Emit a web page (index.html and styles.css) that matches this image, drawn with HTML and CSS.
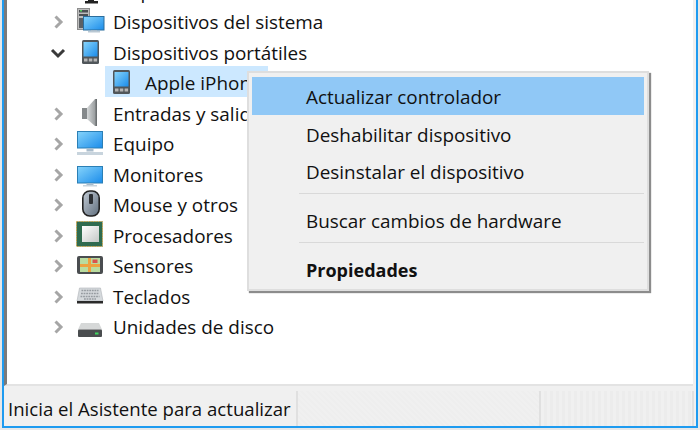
FILE: index.html
```html
<!DOCTYPE html>
<html lang="es">
<head>
  <meta charset="UTF-8" />
  <title>Administrador de dispositivos</title>
  <link rel="stylesheet" href="styles.css">
</head>
<body>
  <svg class="defs" width="0" height="0">
    <defs>
      <linearGradient id="screen" x1="0" y1="0" x2="1" y2="1">
        <stop offset="0" stop-color="#86d4fb"/>
        <stop offset="1" stop-color="#1b8cea"/>
      </linearGradient>
      <linearGradient id="metal" x1="0" y1="0" x2="1" y2="0">
        <stop offset="0" stop-color="#d5d8d9"/>
        <stop offset="1" stop-color="#8d9193"/>
      </linearGradient>
      <linearGradient id="mouse" x1="0" y1="0" x2="1" y2="1">
        <stop offset="0" stop-color="#c3ccd6"/>
        <stop offset="1" stop-color="#5f6d7c"/>
      </linearGradient>
      <linearGradient id="chip" x1="0" y1="0" x2="1" y2="1">
        <stop offset="0" stop-color="#ffffff"/>
        <stop offset="1" stop-color="#c4c8c6"/>
      </linearGradient>
      <g id="tablet">
        <rect x="5" y="1" width="17" height="24" rx="1.5" fill="#50565a"/>
        <rect x="6.500" y="3" width="14" height="14.500" fill="url(#screen)"/>
        <rect x="7" y="19.500" width="3.500" height="3" fill="#b5b5b5"/>
        <rect x="11.800" y="19.500" width="3.500" height="3" fill="#b5b5b5"/>
        <rect x="16.600" y="19.500" width="3.500" height="3" fill="#b5b5b5"/>
      </g>
    </defs>
  </svg>

  <div class="window">
    <div class="tree">
      <div class="row row-top">
        <span class="arrow"></span>
        <svg class="icon" viewBox="0 0 28 28"><path d="M11 21h6v2h4v2.500H8V23h3z" fill="#222"/></svg>
        <span class="label">Dispositivos de interfaz de usuario</span>
      </div>

      <div class="row">
        <svg class="arrow" viewBox="0 0 16 16"><path d="M5.500 2.500L11 8l-5.500 5.500" fill="none" stroke="#a6a6a6" stroke-width="3"/></svg>
        <svg class="icon" viewBox="0 0 28 28">
          <rect x="0.500" y="0.500" width="12" height="21" fill="#bdbdbd" stroke="#8d8d8d"/>
          <rect x="2" y="2" width="9" height="2.500" fill="#4b4f52"/>
          <rect x="3" y="2" width="2" height="1.500" fill="#58d25f"/>
          <rect x="2" y="6" width="9" height="2" fill="#4b4f52"/>
          <rect x="2" y="10" width="4" height="10" fill="#5c6064"/>
          <rect x="6.500" y="8.500" width="20.500" height="13.500" fill="url(#screen)" stroke="#2b6d9c"/>
          <rect x="14" y="22" width="6" height="1" fill="#a9bccb"/>
          <rect x="11" y="23" width="12" height="1.500" fill="#b9c8d3"/>
        </svg>
        <span class="label">Dispositivos del sistema</span>
      </div>

      <div class="row">
        <svg class="arrow" viewBox="0 0 16 16"><path d="M2 5l6 6 6-6" fill="none" stroke="#3a3a3a" stroke-width="3"/></svg>
        <svg class="icon" viewBox="0 0 28 28"><use href="#tablet"/></svg>
        <span class="label">Dispositivos portátiles</span>
      </div>

      <div class="row row-child">
        <div class="selected">
          <svg class="icon" viewBox="0 0 28 28"><use href="#tablet"/></svg>
          <span class="label">Apple iPhone</span>
        </div>
      </div>

      <div class="row">
        <svg class="arrow" viewBox="0 0 16 16"><path d="M5.500 2.500L11 8l-5.500 5.500" fill="none" stroke="#a6a6a6" stroke-width="3"/></svg>
        <svg class="icon" viewBox="0 0 28 28">
          <rect x="5" y="8" width="5" height="11" fill="#85898b"/>
          <path d="M10 8l8-9h2v27h-2l-8-7z" fill="url(#metal)"/>
          <path d="M18.500-1H20v27h-1.500z" fill="#6c7072"/>
        </svg>
        <span class="label">Entradas y salidas de audio</span>
      </div>

      <div class="row">
        <svg class="arrow" viewBox="0 0 16 16"><path d="M5.500 2.500L11 8l-5.500 5.500" fill="none" stroke="#a6a6a6" stroke-width="3"/></svg>
        <svg class="icon" viewBox="0 0 28 28">
          <rect x="0.500" y="1.500" width="25" height="16.500" fill="url(#screen)" stroke="#2b7fb5"/>
          <rect x="9.500" y="18.500" width="7" height="3" fill="#a9bccb"/>
          <rect x="0" y="22" width="26" height="3" fill="#c8d4dd"/>
        </svg>
        <span class="label">Equipo</span>
      </div>

      <div class="row">
        <svg class="arrow" viewBox="0 0 16 16"><path d="M5.500 2.500L11 8l-5.500 5.500" fill="none" stroke="#a6a6a6" stroke-width="3"/></svg>
        <svg class="icon" viewBox="0 0 28 28">
          <rect x="0.500" y="5.500" width="25" height="16.500" fill="url(#screen)" stroke="#2b7fb5"/>
          <rect x="9.500" y="22.500" width="7" height="1.500" fill="#a9bccb"/>
          <rect x="6" y="24" width="14" height="1.500" fill="#c8d4dd"/>
        </svg>
        <span class="label">Monitores</span>
      </div>

      <div class="row">
        <svg class="arrow" viewBox="0 0 16 16"><path d="M5.500 2.500L11 8l-5.500 5.500" fill="none" stroke="#a6a6a6" stroke-width="3"/></svg>
        <svg class="icon" viewBox="0 0 28 28">
          <rect x="5.800" y="0" width="16.400" height="25" rx="7" fill="url(#mouse)" stroke="#222" stroke-width="1.600"/>
          <rect x="12" y="3" width="4" height="10" rx="1" fill="#2c2f33"/>
        </svg>
        <span class="label">Mouse y otros</span>
      </div>

      <div class="row">
        <svg class="arrow" viewBox="0 0 16 16"><path d="M5.500 2.500L11 8l-5.500 5.500" fill="none" stroke="#a6a6a6" stroke-width="3"/></svg>
        <svg class="icon" viewBox="0 0 28 28">
          <rect x="-0.500" y="-0.500" width="26" height="25" fill="#2f6b4f" stroke="#c8a24a" stroke-dasharray="1.500 1"/>
          <rect x="5" y="4" width="17" height="16" fill="url(#chip)"/>
        </svg>
        <span class="label">Procesadores</span>
      </div>

      <div class="row">
        <svg class="arrow" viewBox="0 0 16 16"><path d="M5.500 2.500L11 8l-5.500 5.500" fill="none" stroke="#a6a6a6" stroke-width="3"/></svg>
        <svg class="icon" viewBox="0 0 28 28">
          <rect x="0" y="4" width="26" height="18" rx="2" fill="#4a4d50"/>
          <rect x="3" y="6" width="20" height="14" fill="#b9dc9f"/>
          <path d="M11 6h3v14h-3zM3 12h20v3H3z" fill="#eda23f"/>
          <rect x="15.500" y="7.500" width="5" height="3.500" fill="#d9534f"/>
        </svg>
        <span class="label">Sensores</span>
      </div>

      <div class="row">
        <svg class="arrow" viewBox="0 0 16 16"><path d="M5.500 2.500L11 8l-5.500 5.500" fill="none" stroke="#a6a6a6" stroke-width="3"/></svg>
        <svg class="icon" viewBox="0 0 28 28">
          <path d="M2.500 5h21L26 18H0z" fill="#d5d9dc" stroke="#b0b4b8" stroke-width="0.600"/>
          <path d="M4.500 7.500h17M4 10.500h18M3.500 13.500h19M7 16h12" stroke="#969ba0" stroke-width="1.600" stroke-dasharray="1.800 0.800"/>
          <rect x="0" y="18" width="26" height="2.500" fill="#2a2a2a"/>
        </svg>
        <span class="label">Teclados</span>
      </div>

      <div class="row">
        <svg class="arrow" viewBox="0 0 16 16"><path d="M5.500 2.500L11 8l-5.500 5.500" fill="none" stroke="#a6a6a6" stroke-width="3"/></svg>
        <svg class="icon" viewBox="0 0 28 28">
          <path d="M4 10h18l3 6.500H1z" fill="#d6d8d8"/>
          <rect x="1" y="16.500" width="24" height="7.500" rx="1" fill="#4a4d4f"/>
          <rect x="18" y="19.500" width="3.500" height="2" fill="#3fd65f"/>
        </svg>
        <span class="label">Unidades de disco</span>
      </div>
    </div>

    <div class="statusbar">
      <div class="status-cell status-main">Inicia el Asistente para actualizar</div>
      <div class="status-cell status-mid"></div>
      <div class="status-cell status-end"></div>
    </div>

    <ul class="menu">
      <li class="menu-item active">Actualizar controlador</li>
      <li class="menu-item">Deshabilitar dispositivo</li>
      <li class="menu-item">Desinstalar el dispositivo</li>
      <li class="menu-sep"></li>
      <li class="menu-item">Buscar cambios de hardware</li>
      <li class="menu-sep"></li>
      <li class="menu-item bold">Propiedades</li>
    </ul>
  </div>
</body>
</html>
```

FILE: styles.css
```css
html, body {
  margin: 0;
  height: 100%;
}

body {
  width: 700px;
  height: 430px;
  overflow: hidden;
  background: #e8e8e8;
  font-family: "Open Sans", "Noto Sans", sans-serif;
  font-size: 18.9px;
  color: #111;
}

.defs {
  position: absolute;
}

.window {
  position: relative;
  box-sizing: border-box;
  width: 696px;
  height: 428px;
  margin-left: 2px;
  border: 2px solid #1e9bf0;
  border-top: 0;
  background: #f0f0f0;
  display: flex;
  flex-direction: column;
  overflow: hidden;
}

.tree {
  flex: 1;
  background: #fff;
  margin: 0 3px 3px 0;
  border-left: 3px solid #7a7a7a;
  border-bottom: 2px solid #e3e3e3;
  padding-left: 43px;
  overflow: hidden;
}

.row {
  display: flex;
  align-items: center;
  height: 30.5px;
}

.row-top {
  margin-top: -23.75px;
}

.arrow {
  width: 16px;
  height: 16px;
  margin-right: 11px;
  flex: none;
}

.icon {
  width: 28px;
  height: 28px;
  flex: none;
  overflow: visible;
}

.label {
  margin-left: 8px;
  white-space: nowrap;
}

.row-child {
  padding-left: 55px;
}

.selected {
  box-sizing: border-box;
  display: flex;
  align-items: center;
  background: #cce8ff;
  height: 31px;
  width: 163px;
  margin-bottom: 3px;
  padding: 3px 0 0 3px;
}

.selected .label {
  margin-left: 9px;
}

.statusbar {
  box-sizing: border-box;
  height: 37px;
  display: flex;
  padding-top: 2px;
}

.status-cell {
  box-sizing: border-box;
  border-right: 2px solid #e0e0e0;
  padding-left: 4px;
  font-size: 18.6px;
  line-height: 35px;
  white-space: nowrap;
}

.status-main {
  width: 294px;
}

.status-mid {
  width: 243px;
  background: repeating-linear-gradient(45deg, #f0f0f0 0 2px, #eeeeee 2px 4px);
}

.status-end {
  width: 153px;
  background: repeating-linear-gradient(90deg, #f0f0f0 0 3px, #ececec 3px 6px);
}

.menu {
  position: absolute;
  left: 243px;
  top: 71px;
  width: 402px;
  box-sizing: border-box;
  margin: 0;
  padding: 4px 3px 1.5px 3px;
  list-style: none;
  background: #f0f0f0;
  border: 2px solid #dedede;
  box-shadow: 2px 2px 1px #8c8c8c;
}

.menu-item {
  height: 37.5px;
  line-height: 40px;
  padding-left: 54px;
  white-space: nowrap;
}

.menu-item.active {
  background: #90c8f6;
}

.menu-item.bold {
  font-size: 18px;
  font-weight: 700;
}

.menu-sep {
  height: 1px;
  margin: 3px 0 7.5px 47px;
  background: #d9d9d9;
}
```
